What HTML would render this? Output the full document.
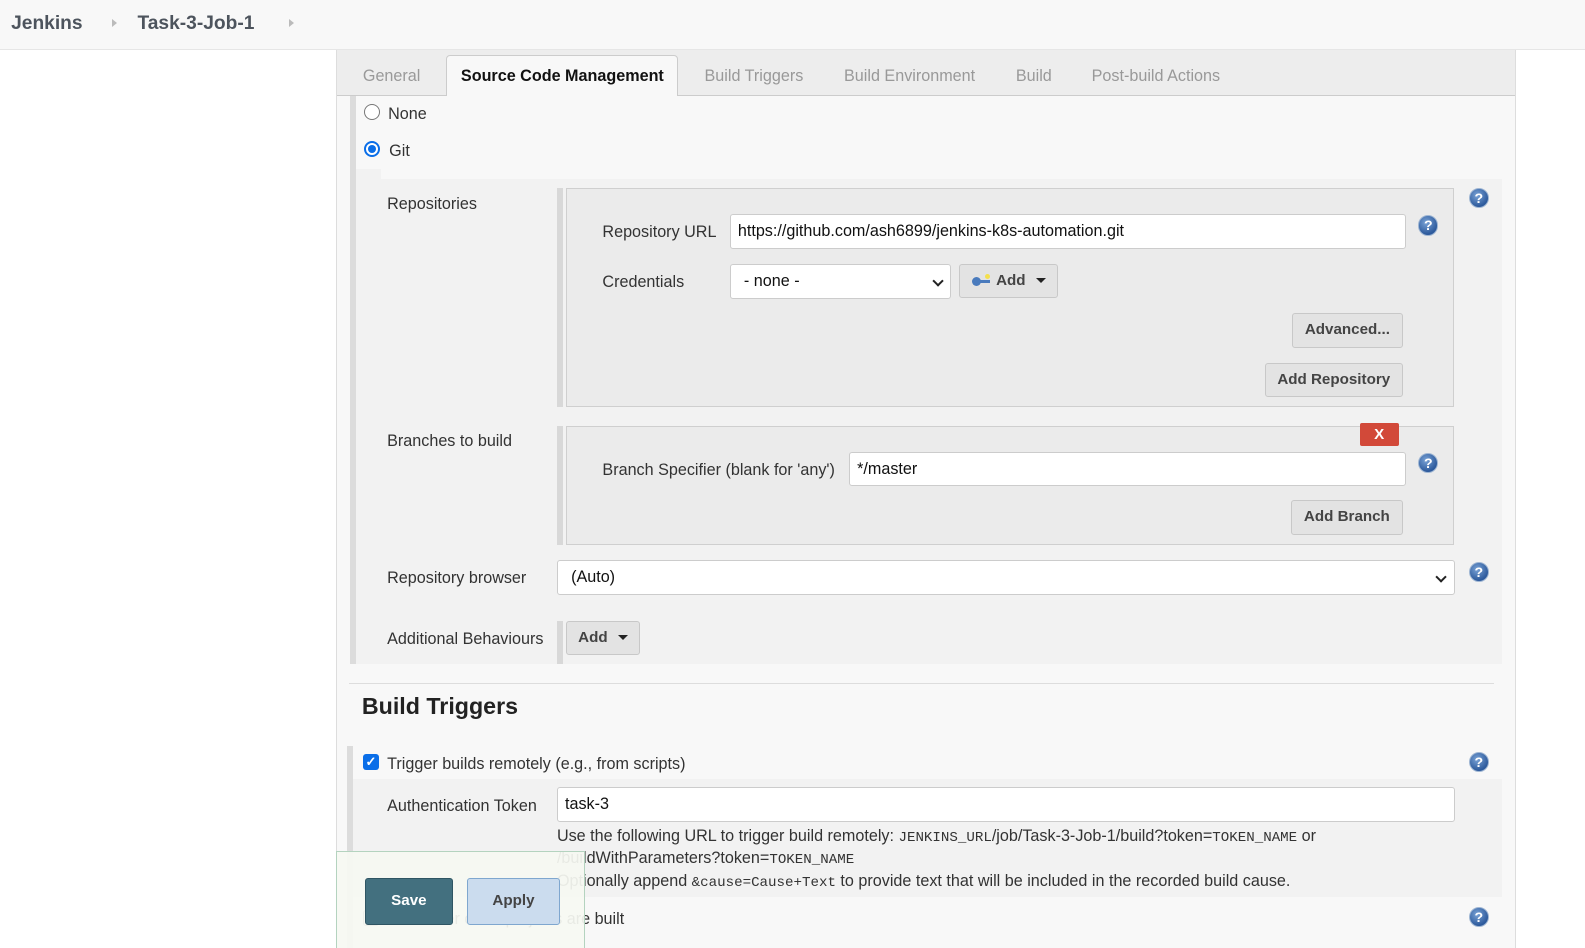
<!DOCTYPE html>
<html><head><meta charset="utf-8">
<style>
*{box-sizing:border-box;margin:0;padding:0}
html,body{width:1585px;height:938px;overflow:hidden;background:#fff}
body{zoom:1.0108;font-family:"Liberation Sans",Arial,sans-serif;font-size:16px;color:#333;position:relative}
.a{position:absolute}
.lbl{position:absolute;line-height:20px;margin-top:-9px;color:#333;white-space:nowrap}
.inp{position:absolute;background:#fff;border:1px solid #ccc;border-radius:3px;padding-left:7px;line-height:32px;color:#111;white-space:nowrap}
.btn{position:absolute;background:#e3e3e3;border:1px solid #c8c8c8;border-radius:3px;font-weight:bold;color:#444;font-size:15px;text-align:center}
.help{position:absolute;width:20px;height:20px;border-radius:50%;background:radial-gradient(circle at 40% 35%,#7aa3d6,#2d5a9c 70%);border:1px solid #9fb6d3;color:#fff;font-weight:bold;font-size:14px;line-height:18px;text-align:center;margin:-10px 0 0 -10px}
.bar{position:absolute;background:#d8d8d8;width:6px}
.box{position:absolute;background:#ebebeb;border:1px solid #cfcfcf}
.mono{font-family:"Liberation Mono",monospace;font-size:14px}
.caret{display:inline-block;width:0;height:0;border-left:5px solid transparent;border-right:5px solid transparent;border-top:5px solid #222;vertical-align:middle;margin-left:12px}
.chev{position:absolute;right:8px;top:12px;width:8px;height:8px;border-right:2px solid #222;border-bottom:2px solid #222;transform:rotate(45deg)}
</style></head><body>
<div class="a" style="left:0;top:0;width:1568px;height:49px;background:#f8f8f8;border-bottom:1px solid #e6e6e6"></div>
<div class="a" style="left:11px;top:13px;font-size:19px;font-weight:bold;color:#4d545d">Jenkins</div>
<div class="a" style="left:111px;top:19px;border-left:5px solid #bbb;border-top:4px solid transparent;border-bottom:4px solid transparent"></div>
<div class="a" style="left:136px;top:13px;font-size:19px;font-weight:bold;color:#4d545d">Task-3-Job-1</div>
<div class="a" style="left:286px;top:19px;border-left:5px solid #bbb;border-top:4px solid transparent;border-bottom:4px solid transparent"></div>

<div class="a" style="left:332px;top:49px;width:1168px;height:900px;background:#f8f8f8;border-left:1px solid #ddd;border-right:1px solid #ddd"></div>
<div class="a" style="left:333px;top:49px;width:1166px;height:46px;background:#ededed;border-bottom:1px solid #ccc"></div>
<div class="a" style="left:441px;top:54px;width:230px;height:41px;background:#f8f8f8;border:1px solid #ccc;border-bottom:none;border-radius:4px 4px 0 0"></div>
<div class="lbl" style="left:359px;top:74px;color:#999">General</div>
<div class="lbl" style="left:456px;top:74px;color:#111;font-weight:bold">Source Code Management</div>
<div class="lbl" style="left:697px;top:74px;color:#999">Build Triggers</div>
<div class="lbl" style="left:835px;top:74px;color:#999">Build Environment</div>
<div class="lbl" style="left:1005px;top:74px;color:#999">Build</div>
<div class="lbl" style="left:1080px;top:74px;color:#999">Post-build Actions</div>

<div class="bar" style="left:346px;top:95px;height:562px;background:#dcdcdc"></div>
<div class="a" style="left:360px;top:103px;width:16px;height:16px;border-radius:50%;border:1px solid #777;background:#fff"></div>
<div class="lbl" style="left:384px;top:112px">None</div>
<div class="a" style="left:360px;top:139px;width:16px;height:16px;border-radius:50%;border:2px solid #0a6ee8;background:#fff"></div>
<div class="a" style="left:364px;top:143px;width:8px;height:8px;border-radius:50%;background:#0a6ee8"></div>
<div class="lbl" style="left:385px;top:148px">Git</div>

<div class="a" style="left:352px;top:167px;width:25px;height:10px;background:#f2f2f2"></div>
<div class="a" style="left:352px;top:177px;width:1134px;height:480px;background:#f2f2f2"></div>
<div class="lbl" style="left:383px;top:201px">Repositories</div>
<div class="lbl" style="left:383px;top:435px">Branches to build</div>
<div class="lbl" style="left:383px;top:571px">Repository browser</div>
<div class="lbl" style="left:383px;top:631px">Additional Behaviours</div>

<div class="bar" style="left:551px;top:186px;height:217px"></div>
<div class="box" style="left:560px;top:186px;width:878px;height:217px"></div>
<div class="lbl" style="left:596px;top:229px">Repository URL</div>
<div class="inp" style="left:722px;top:212px;width:669px;height:34px">https://github.com/ash6899/jenkins-k8s-automation.git</div>
<div class="help" style="left:1413px;top:223px">?</div>
<div class="help" style="left:1463px;top:196px">?</div>
<div class="lbl" style="left:596px;top:278px">Credentials</div>
<div class="inp" style="left:722px;top:261px;width:219px;height:35px;padding-left:13px">- none -<div class="chev"></div></div>
<div class="btn" style="left:949px;top:261px;width:98px;height:34px;line-height:32px"><span style="display:inline-block;position:relative;width:20px;height:10px;vertical-align:middle;margin-right:4px"><span class="a" style="left:0;top:1px;width:9px;height:9px;border-radius:50%;background:#4a7bbd"></span><span class="a" style="left:6px;top:4px;width:12px;height:3px;background:#4a7bbd"></span><span class="a" style="left:13px;top:-2px;width:5px;height:5px;border-radius:50%;background:#f4e04d"></span></span>Add<span class="caret" style="margin-left:10px"></span></div>
<div class="btn" style="left:1278px;top:310px;width:110px;height:34px;line-height:32px">Advanced...</div>
<div class="btn" style="left:1251px;top:359px;width:137px;height:34px;line-height:32px">Add Repository</div>

<div class="bar" style="left:551px;top:421px;height:118px"></div>
<div class="box" style="left:560px;top:421px;width:878px;height:118px"></div>
<div class="a" style="left:1345px;top:418px;width:39px;height:23px;background:#d24939;border-radius:2px;color:#fff;font-weight:bold;text-align:center;line-height:23px;font-size:15px">X</div>
<div class="lbl" style="left:596px;top:464px">Branch Specifier (blank for 'any')</div>
<div class="inp" style="left:840px;top:447px;width:551px;height:34px">*/master</div>
<div class="help" style="left:1413px;top:458px">?</div>
<div class="btn" style="left:1277px;top:495px;width:111px;height:34px;line-height:32px">Add Branch</div>

<div class="inp" style="left:551px;top:554px;width:888px;height:35px;padding-left:13px">(Auto)<div class="chev"></div></div>
<div class="help" style="left:1463px;top:566px">?</div>

<div class="bar" style="left:551px;top:614px;height:43px"></div>
<div class="btn" style="left:560px;top:614px;width:73px;height:34px;line-height:32px">Add<span class="caret" style="margin-left:10px"></span></div>

<div class="a" style="left:345px;top:676px;width:1133px;height:1px;background:#ddd"></div>
<div class="a" style="left:358px;top:686px;font-size:23px;font-weight:bold;color:#222">Build Triggers</div>

<div class="bar" style="left:343px;top:738px;height:200px;background:#dcdcdc"></div>
<div class="a" style="left:359px;top:746px;width:16px;height:16px;border-radius:3px;background:#0a6ee8;color:#fff;font-size:13px;line-height:16px;text-align:center;font-weight:bold">✓</div>
<div class="lbl" style="left:383px;top:755px">Trigger builds remotely (e.g., from scripts)</div>
<div class="help" style="left:1463px;top:754px">?</div>

<div class="a" style="left:349px;top:771px;width:1137px;height:116px;background:#f2f2f2"></div>
<div class="lbl" style="left:383px;top:796px">Authentication Token</div>
<div class="inp" style="left:551px;top:779px;width:888px;height:34px">task-3</div>
<div class="lbl" style="left:551px;top:826px">Use the following URL to trigger build remotely: <span class="mono">JENKINS_URL</span>/job/Task-3-Job-1/build?token=<span class="mono">TOKEN_NAME</span> or</div>
<div class="lbl" style="left:551px;top:848px">/buildWithParameters?token=<span class="mono">TOKEN_NAME</span></div>
<div class="lbl" style="left:551px;top:871px">Optionally append <span class="mono">&amp;cause=Cause+Text</span> to provide text that will be included in the recorded build cause.</div>

<div class="a" style="left:359px;top:900px;width:16px;height:16px;border-radius:3px;border:1px solid #777;background:#fff"></div>
<div class="lbl" style="left:383px;top:908px">Build after other projects are built</div>
<div class="help" style="left:1463px;top:907px">?</div>

<div class="a" style="left:332px;top:842px;width:247px;height:100px;background:rgba(246,249,242,0.93);border:1px solid #b4d3bf"></div>
<div class="a" style="left:361px;top:869px;width:87px;height:46px;background:#43707f;border:1px solid #2f5563;border-radius:3px;color:#fff;font-weight:bold;font-size:15px;text-align:center;line-height:44px">Save</div>
<div class="a" style="left:462px;top:869px;width:92px;height:46px;background:#cbdcee;border:1px solid #7fa7cf;border-radius:3px;color:#444;font-weight:bold;font-size:15px;text-align:center;line-height:44px">Apply</div>
</body></html>
